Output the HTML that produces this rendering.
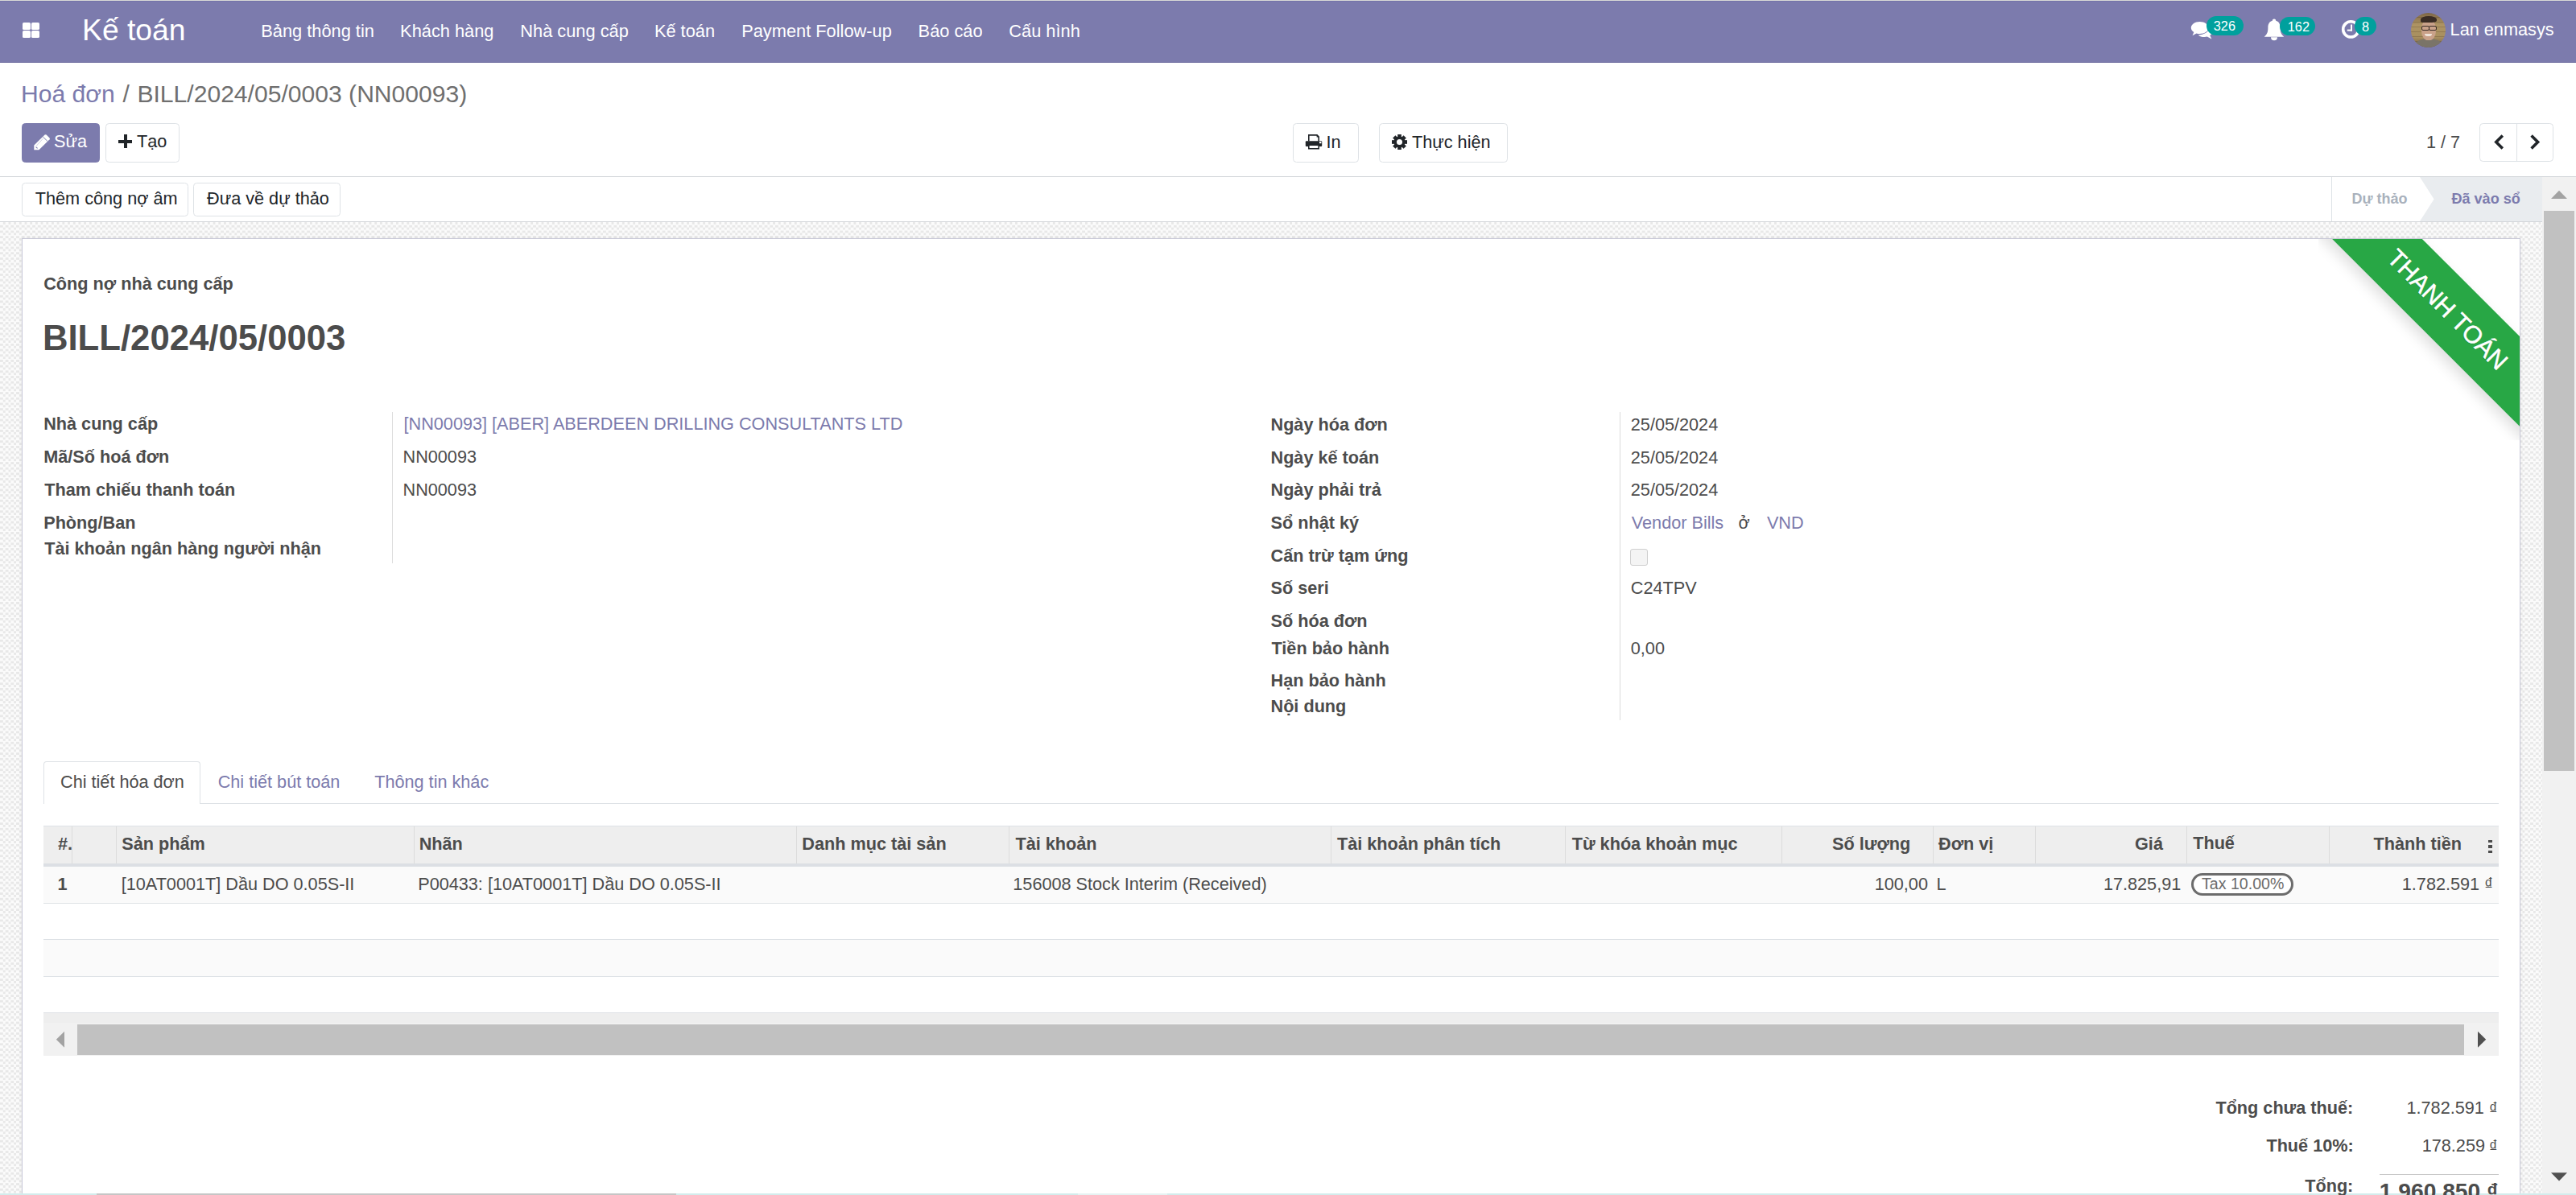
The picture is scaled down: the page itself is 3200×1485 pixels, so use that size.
<!DOCTYPE html>
<html lang="vi"><head><meta charset="utf-8"><title>BILL/2024/05/0003</title>
<style>
html,body{margin:0;padding:0;width:3200px;height:1485px;overflow:hidden;background:#fff;font-family:"Liberation Sans", sans-serif;}
.a{position:absolute;}
.t{position:absolute;white-space:pre;z-index:2;}
svg.a{overflow:visible;z-index:2;}
</style></head><body>
<div class="a" style="left:0.00px;top:0.00px;width:3200.00px;height:1.30px;background:#d9dad6;"></div>
<div class="a" style="left:0.00px;top:1.30px;width:3200.00px;height:76.20px;background:#7C7BAD;"></div>
<div class="a" style="left:0.00px;top:1.30px;width:3200.00px;height:0.90px;background:#7473AA;"></div>
<div class="a" style="left:0.00px;top:76.60px;width:3200.00px;height:1.00px;background:#6f6ea0;"></div>
<div class="a" style="left:27.90px;top:28.20px;width:10.10px;height:8.90px;background:#fff;border-radius:1.6px;"></div>
<div class="a" style="left:39.00px;top:28.20px;width:10.10px;height:8.90px;background:#fff;border-radius:1.6px;"></div>
<div class="a" style="left:27.90px;top:38.00px;width:10.10px;height:8.90px;background:#fff;border-radius:1.6px;"></div>
<div class="a" style="left:39.00px;top:38.00px;width:10.10px;height:8.90px;background:#fff;border-radius:1.6px;"></div>
<svg class="a" style="left:2721px;top:26px" width="28" height="24" viewBox="0 0 28 24"><path d="M11.5 1 C17.8 1 22.5 4.6 22.5 8.5 C22.5 12.6 17.8 16 11.5 16 C10 16 8.7 15.8 7.5 15.4 L2.5 18.3 L4.3 14 C2 12.6 0.8 10.6 0.8 8.5 C0.8 4.6 5.4 1 11.5 1 Z" fill="#fff"/><path d="M23.8 7.5 C26.3 9 27.3 10.8 27.3 12.9 C27.3 14.9 26.2 16.6 24.3 17.9 L26.4 22.4 L20.8 19.6 C19.7 19.9 18.7 20.1 17.5 20.1 C14.2 20.1 11.5 19.1 9.7 17.4 C16.8 17.4 23.8 13.4 23.8 7.5 Z" fill="#fff"/></svg>
<svg class="a" style="left:2812px;top:23px" width="26" height="28" viewBox="0 0 26 28"><circle cx="13" cy="2.6" r="2.2" fill="#fff"/><path d="M13 2.5 C18.5 2.5 20.6 6.6 20.6 11 C20.6 17.5 21.8 19.5 25.3 22.8 L0.7 22.8 C4.2 19.5 5.4 17.5 5.4 11 C5.4 6.6 7.5 2.5 13 2.5 Z" fill="#fff"/><path d="M9 23.2 A4 4 0 0 0 17 23.2 Z" fill="#fff"/></svg>
<svg class="a" style="left:2908px;top:24px" width="26" height="26" viewBox="0 0 26 26"><circle cx="12.3" cy="12.4" r="9.6" fill="none" stroke="#fff" stroke-width="3.6"/><rect x="12" y="6.5" width="2" height="8" fill="#fff"/><rect x="7.8" y="12.6" width="6.2" height="2" fill="#fff"/></svg>
<div class="a" style="left:2740.80px;top:19.60px;width:46.20px;height:24.40px;background:#00A09D;border-radius:12.2px;z-index:2;"></div>
<div class="a" style="left:2832.10px;top:20.70px;width:43.90px;height:23.30px;background:#00A09D;border-radius:11.7px;z-index:2;"></div>
<div class="a" style="left:2924.80px;top:20.90px;width:27.40px;height:23.10px;background:#00A09D;border-radius:11.6px;z-index:2;"></div>
<div class="a" style="left:2995px;top:16px;width:43px;height:43px;border-radius:50%;overflow:hidden;z-index:2;background:linear-gradient(180deg,#7d6646 0%,#ae9463 35%,#a88f5f 70%,#6e5a40 100%)"><div class="a" style="left:0;top:0;width:43px;height:43px;background:repeating-linear-gradient(180deg,rgba(0,0,0,0) 0 5px,rgba(60,40,20,.22) 5px 6px)"></div><div class="a" style="left:6px;top:32px;width:32px;height:15px;border-radius:48% 48% 0 0;background:#7a7468"></div><div class="a" style="left:13px;top:8px;width:18px;height:26px;border-radius:46% 46% 44% 44%;background:#c9a189"></div><div class="a" style="left:12px;top:4px;width:20px;height:8px;border-radius:50% 50% 30% 20%;background:#3a2c24"></div><div class="a" style="left:13px;top:16px;width:8px;height:4px;border:1.3px solid #3a2e28;border-radius:2px"></div><div class="a" style="left:22px;top:16px;width:8px;height:4px;border:1.3px solid #3a2e28;border-radius:2px"></div><div class="a" style="left:17px;top:26px;width:9px;height:2.5px;border-radius:0 0 5px 5px;background:#efe4da"></div></div>
<div class="a" style="left:27.00px;top:153.00px;width:97.00px;height:49.00px;background:#7C7BAD;border:1px solid #7C7BAD;box-sizing:border-box;border-radius:4.5px;"></div>
<svg class="a" style="left:42px;top:166.5px" width="21" height="20" viewBox="0 0 21 20"><path d="M0.3 13.4 L13.6 0.6 Q14.6 -0.2 15.6 0.6 L19.6 4.6 Q20.3 5.4 19.6 6.2 L6.4 19.3 L0.3 19.3 Z" fill="#fff"/><path d="M11.4 3.0 L16.8 8.3" stroke="#7C7BAD" stroke-width="1.0"/><path d="M3.2 14.3 L11.4 5.2" stroke="#7C7BAD" stroke-width="0.6" opacity="0.6"/><path d="M2.6 15.6 L4.6 17.4" stroke="#7C7BAD" stroke-width="1.1"/></svg>
<div class="a" style="left:131.20px;top:153.00px;width:91.40px;height:49.00px;background:#fff;border:1px solid #dee2e6;box-sizing:border-box;border-radius:4.5px;"></div>
<div class="a" style="left:146.90px;top:173.60px;width:17.10px;height:4.00px;background:#212529;"></div>
<div class="a" style="left:153.50px;top:166.90px;width:4.00px;height:17.30px;background:#212529;"></div>
<div class="a" style="left:1606.00px;top:153.00px;width:81.60px;height:48.70px;background:#fff;border:1px solid #dee2e6;box-sizing:border-box;border-radius:4.5px;"></div>
<svg class="a" style="left:1621px;top:166px" width="22" height="21" viewBox="0 0 22 21"><path d="M4.8 9.5 V1.9 H15 L17.2 4.1 V9.5" fill="#fff" stroke="#212529" stroke-width="1.6"/><path d="M14.6 1.1 L18 4.5 L14.6 4.5 Z" fill="#212529"/><rect x="0.8" y="9.2" width="20.4" height="6.9" rx="1" fill="#212529"/><rect x="18.0" y="10.0" width="2.4" height="2.2" fill="#fff"/><path d="M4.8 15 V18.7 H17.2 V15" fill="#fff" stroke="#212529" stroke-width="1.6"/></svg>
<div class="a" style="left:1713.20px;top:153.00px;width:159.60px;height:48.70px;background:#fff;border:1px solid #dee2e6;box-sizing:border-box;border-radius:4.5px;"></div>
<svg class="a" style="left:1729px;top:167px" width="19" height="19" viewBox="0 0 18.8 18.8"><rect x="7.1" y="0" width="4.6" height="6" transform="rotate(0 9.4 9.4)" fill="#212529"/><rect x="7.1" y="0" width="4.6" height="6" transform="rotate(45 9.4 9.4)" fill="#212529"/><rect x="7.1" y="0" width="4.6" height="6" transform="rotate(90 9.4 9.4)" fill="#212529"/><rect x="7.1" y="0" width="4.6" height="6" transform="rotate(135 9.4 9.4)" fill="#212529"/><rect x="7.1" y="0" width="4.6" height="6" transform="rotate(180 9.4 9.4)" fill="#212529"/><rect x="7.1" y="0" width="4.6" height="6" transform="rotate(225 9.4 9.4)" fill="#212529"/><rect x="7.1" y="0" width="4.6" height="6" transform="rotate(270 9.4 9.4)" fill="#212529"/><rect x="7.1" y="0" width="4.6" height="6" transform="rotate(315 9.4 9.4)" fill="#212529"/><circle cx="9.4" cy="9.4" r="7.0" fill="#212529"/><circle cx="9.4" cy="9.4" r="3.5" fill="#fff"/></svg>
<div class="a" style="left:3080.20px;top:153.20px;width:92.20px;height:48.30px;background:#fff;border:1px solid #dee2e6;box-sizing:border-box;border-radius:4.5px;"></div>
<div class="a" style="left:3126.10px;top:153.20px;width:1.00px;height:48.30px;background:#dee2e6;"></div>
<svg class="a" style="left:3096px;top:165px" width="16" height="23" viewBox="0 0 16 23"><path d="M12.8 3.4 L4.8 11.4 L12.8 19.4" fill="none" stroke="#212529" stroke-width="3.6"/></svg>
<svg class="a" style="left:3141px;top:165px" width="16" height="23" viewBox="0 0 16 23"><path d="M3.6 3.4 L11.6 11.4 L3.6 19.4" fill="none" stroke="#212529" stroke-width="3.6"/></svg>
<div class="a" style="left:0.00px;top:219.00px;width:3200.00px;height:1.00px;background:#d3d6da;"></div>
<div class="a" style="left:27.30px;top:227.20px;width:207.00px;height:41.50px;background:#fff;border:1px solid #dee2e6;box-sizing:border-box;border-radius:4.5px;"></div>
<div class="a" style="left:240.40px;top:227.20px;width:183.10px;height:41.50px;background:#fff;border:1px solid #dee2e6;box-sizing:border-box;border-radius:4.5px;"></div>
<div class="a" style="left:2896.20px;top:220.00px;width:1.00px;height:55.00px;background:#dee2e6;"></div>
<svg class="a" style="left:3006px;top:220px" width="152" height="55" viewBox="0 0 152 55"><path d="M0 0 H152 V55 H0 L17.6 27.5 Z" fill="#e9ecef"/></svg>
<div class="a" style="left:0.00px;top:275.00px;width:3158.00px;height:1.00px;background:#d3d6da;"></div>
<div class="a" style="left:0.00px;top:276.00px;width:3158.00px;height:1207.00px;background-color:#f1f1f1;background-image:conic-gradient(#e8e8e8 25%, #fbfbfb 0 50%, #e8e8e8 0 75%, #fbfbfb 0);background-size:6.7px 6.7px;"></div>
<div class="a" style="left:27.00px;top:296.00px;width:3104.00px;height:1187.00px;background:#fff;border:1px solid #c9c9d8;border-bottom:none;box-sizing:border-box;box-shadow:0 0 5px rgba(0,0,0,.07);"></div>
<div class="a" style="left:0.00px;top:1483.00px;width:3200.00px;height:2.00px;background:#d3ecec;"></div>
<div class="a" style="left:120.00px;top:1483.00px;width:720.00px;height:2.00px;background:#c6c6c6;"></div>
<div class="a" style="left:1339.00px;top:1483.00px;width:111.00px;height:2.00px;background:#e6f2f2;"></div>
<div class="a" style="left:3158.00px;top:220.00px;width:42.00px;height:1263.00px;background:#f1f1f1;"></div>
<div class="a" style="left:3160.00px;top:262.00px;width:38.00px;height:696.00px;background:#c1c1c1;"></div>
<svg class="a" style="left:3168px;top:236px" width="22" height="12" viewBox="0 0 22 12"><path d="M1 11 L11 0.8 L21 11 Z" fill="#a3a3a3"/></svg>
<svg class="a" style="left:3168px;top:1457px" width="22" height="11" viewBox="0 0 22 11"><path d="M1 0.2 L21 0.2 L11 10.6 Z" fill="#505050"/></svg>
<div class="a" style="left:2880px;top:296.8px;width:250px;height:250px;overflow:hidden;z-index:3"><div class="a" style="left:-26.8px;top:48.3px;-webkit-text-stroke:0.5px #fff;width:375px;height:79.2px;line-height:79.2px;background:#28a745;transform:rotate(45deg);box-shadow:0 8px 17px rgba(0,0,0,.13);color:#fff;text-align:center;font-size:30.4px;text-shadow:0 1px 1px rgba(0,0,0,.2)">THANH TOÁN</div></div>
<div class="a" style="left:487.20px;top:512.00px;width:1.00px;height:188.00px;background:#dcdcdc;"></div>
<div class="a" style="left:2012.20px;top:512.00px;width:1.00px;height:383.00px;background:#dcdcdc;"></div>
<div class="a" style="left:2025.40px;top:681.60px;width:21.60px;height:21.00px;background:#f4f4f4;border:1px solid #cfcfcf;box-sizing:border-box;border-radius:3px;"></div>
<div class="a" style="left:54.00px;top:998.00px;width:3050.00px;height:1.20px;background:#dee2e6;"></div>
<div class="a" style="left:54.30px;top:946.40px;width:195.20px;height:53.10px;background:#fff;border:1px solid #dee2e6;border-bottom:none;box-sizing:border-box;border-radius:4px 4px 0 0;"></div>
<div class="a" style="left:54.10px;top:1026.00px;width:3049.80px;height:1.00px;background:#dee2e6;"></div>
<div class="a" style="left:54.10px;top:1027.00px;width:3049.80px;height:46.20px;background:#eeeeee;"></div>
<div class="a" style="left:54.10px;top:1073.20px;width:3049.80px;height:3.70px;background:#dcdfe4;"></div>
<div class="a" style="left:88.90px;top:1027.00px;width:1.00px;height:46.20px;background:#dcdcdc;"></div>
<div class="a" style="left:143.80px;top:1027.00px;width:1.00px;height:46.20px;background:#dcdcdc;"></div>
<div class="a" style="left:513.60px;top:1027.00px;width:1.00px;height:46.20px;background:#dcdcdc;"></div>
<div class="a" style="left:988.70px;top:1027.00px;width:1.00px;height:46.20px;background:#dcdcdc;"></div>
<div class="a" style="left:1252.80px;top:1027.00px;width:1.00px;height:46.20px;background:#dcdcdc;"></div>
<div class="a" style="left:1653.00px;top:1027.00px;width:1.00px;height:46.20px;background:#dcdcdc;"></div>
<div class="a" style="left:1944.20px;top:1027.00px;width:1.00px;height:46.20px;background:#dcdcdc;"></div>
<div class="a" style="left:2213.20px;top:1027.00px;width:1.00px;height:46.20px;background:#dcdcdc;"></div>
<div class="a" style="left:2401.20px;top:1027.00px;width:1.00px;height:46.20px;background:#dcdcdc;"></div>
<div class="a" style="left:2528.00px;top:1027.00px;width:1.00px;height:46.20px;background:#dcdcdc;"></div>
<div class="a" style="left:2716.10px;top:1027.00px;width:1.00px;height:46.20px;background:#dcdcdc;"></div>
<div class="a" style="left:2893.00px;top:1027.00px;width:1.00px;height:46.20px;background:#dcdcdc;"></div>
<div class="a" style="left:54.10px;top:1076.90px;width:3049.80px;height:45.10px;background:#fafafa;"></div>
<div class="a" style="left:54.10px;top:1122.00px;width:3049.80px;height:1.00px;background:#dee2e6;"></div>
<div class="a" style="left:54.10px;top:1167.00px;width:3049.80px;height:1.00px;background:#dee2e6;"></div>
<div class="a" style="left:54.10px;top:1168.00px;width:3049.80px;height:45.00px;background:#fafafa;"></div>
<div class="a" style="left:54.10px;top:1213.00px;width:3049.80px;height:1.00px;background:#dee2e6;"></div>
<div class="a" style="left:54.10px;top:1257.60px;width:3049.80px;height:1.00px;background:#dee2e6;"></div>
<div class="a" style="left:54.10px;top:1258.60px;width:3049.80px;height:12.10px;background:#eeeeee;"></div>
<div class="a" style="left:54.10px;top:1270.70px;width:3049.80px;height:41.70px;background:#f1f1f1;"></div>
<div class="a" style="left:96.00px;top:1273.00px;width:2965.00px;height:37.50px;background:#c1c1c1;"></div>
<svg class="a" style="left:69px;top:1281px" width="12" height="22" viewBox="0 0 12 22"><path d="M11 0.8 L11 20.8 L0.8 10.8 Z" fill="#a3a3a3"/></svg>
<svg class="a" style="left:3077px;top:1281px" width="12" height="22" viewBox="0 0 12 22"><path d="M1 0.8 L1 20.8 L11.2 10.8 Z" fill="#505050"/></svg>
<div class="a" style="left:3091.20px;top:1043.50px;width:5.20px;height:3.60px;background:#4c4c4c;"></div>
<div class="a" style="left:3091.20px;top:1050.20px;width:5.20px;height:3.60px;background:#4c4c4c;"></div>
<div class="a" style="left:3091.20px;top:1056.90px;width:5.20px;height:3.60px;background:#4c4c4c;"></div>
<div class="a" style="left:2722.30px;top:1084.70px;width:126.90px;height:28.60px;background:#fff;border:3px solid #6c6c6c;box-sizing:border-box;border-radius:15px;"></div>
<div class="a" style="left:2956.00px;top:1458.90px;width:147.80px;height:1.10px;background:#c8c8c8;"></div>
<div class="t" style="left:102.00px;top:19.43px;font-size:37.3px;line-height:37.3px;font-weight:400;color:#fff;">Kế toán</div>
<div class="t" style="left:324.30px;top:27.65px;font-size:21.8px;line-height:21.8px;font-weight:400;color:#fff;">Bảng thông tin</div>
<div class="t" style="left:497.10px;top:27.65px;font-size:21.8px;line-height:21.8px;font-weight:400;color:#fff;">Khách hàng</div>
<div class="t" style="left:646.30px;top:27.65px;font-size:21.8px;line-height:21.8px;font-weight:400;color:#fff;">Nhà cung cấp</div>
<div class="t" style="left:812.90px;top:27.65px;font-size:21.8px;line-height:21.8px;font-weight:400;color:#fff;">Kế toán</div>
<div class="t" style="left:921.20px;top:27.65px;font-size:21.8px;line-height:21.8px;font-weight:400;color:#fff;">Payment Follow-up</div>
<div class="t" style="left:1140.60px;top:27.65px;font-size:21.8px;line-height:21.8px;font-weight:400;color:#fff;">Báo cáo</div>
<div class="t" style="left:1253.30px;top:27.65px;font-size:21.8px;line-height:21.8px;font-weight:400;color:#fff;">Cấu hình</div>
<div class="t" style="left:2749.80px;top:23.70px;font-size:16.3px;line-height:16.3px;font-weight:400;color:#fff;">326</div>
<div class="t" style="left:2841.80px;top:24.80px;font-size:16.3px;line-height:16.3px;font-weight:400;color:#fff;">162</div>
<div class="t" style="left:2934.00px;top:25.00px;font-size:16.3px;line-height:16.3px;font-weight:400;color:#fff;">8</div>
<div class="t" style="left:3043.60px;top:26.23px;font-size:21.7px;line-height:21.7px;font-weight:400;color:#fff;">Lan enmasys</div>
<div class="t" style="left:26.00px;top:102.32px;font-size:30.1px;line-height:30.1px;font-weight:400;color:#7C7BAD;">Hoá đơn</div>
<div class="t" style="left:152.60px;top:102.32px;font-size:30.1px;line-height:30.1px;font-weight:400;color:#6f6f6f;">/</div>
<div class="t" style="left:170.40px;top:102.32px;font-size:30.1px;line-height:30.1px;font-weight:400;color:#6f6f6f;">BILL/2024/05/0003 (NN00093)</div>
<div class="t" style="left:67.10px;top:165.46px;font-size:21.67px;line-height:21.67px;font-weight:400;color:#fff;">Sửa</div>
<div class="t" style="left:170.00px;top:165.46px;font-size:21.67px;line-height:21.67px;font-weight:400;color:#212529;">Tạo</div>
<div class="t" style="left:1647.60px;top:165.76px;font-size:21.67px;line-height:21.67px;font-weight:400;color:#212529;">In</div>
<div class="t" style="left:1754.00px;top:165.76px;font-size:21.67px;line-height:21.67px;font-weight:400;color:#212529;">Thực hiện</div>
<div class="t" style="left:3013.90px;top:165.56px;font-size:21.67px;line-height:21.67px;font-weight:400;color:#4c4c4c;">1 / 7</div>
<div class="t" style="left:43.80px;top:236.36px;font-size:21.67px;line-height:21.67px;font-weight:400;color:#212529;">Thêm công nợ âm</div>
<div class="t" style="left:257.00px;top:236.36px;font-size:21.67px;line-height:21.67px;font-weight:400;color:#212529;">Đưa về dự thảo</div>
<div class="t" style="left:2921.50px;top:238.36px;font-size:18.0px;line-height:18.0px;font-weight:700;color:#a9b1bc;">Dự thảo</div>
<div class="t" style="left:3045.40px;top:238.28px;font-size:18.1px;line-height:18.1px;font-weight:700;color:#7C7BAD;">Đã vào sổ</div>
<div class="t" style="left:54.20px;top:342.06px;font-size:21.67px;line-height:21.67px;font-weight:700;color:#4c4c4c;">Công nợ nhà cung cấp</div>
<div class="t" style="left:52.90px;top:397.91px;font-size:43.7px;line-height:43.7px;font-weight:700;color:#4c4c4c;">BILL/2024/05/0003</div>
<div class="t" style="left:54.20px;top:516.46px;font-size:21.67px;line-height:21.67px;font-weight:700;color:#4c4c4c;">Nhà cung cấp</div>
<div class="t" style="left:54.20px;top:557.16px;font-size:21.67px;line-height:21.67px;font-weight:700;color:#4c4c4c;">Mã/Số hoá đơn</div>
<div class="t" style="left:55.20px;top:598.46px;font-size:21.67px;line-height:21.67px;font-weight:700;color:#4c4c4c;">Tham chiếu thanh toán</div>
<div class="t" style="left:54.20px;top:639.26px;font-size:21.67px;line-height:21.67px;font-weight:700;color:#4c4c4c;">Phòng/Ban</div>
<div class="t" style="left:55.20px;top:671.06px;font-size:21.67px;line-height:21.67px;font-weight:700;color:#4c4c4c;">Tài khoản ngân hàng người nhận</div>
<div class="t" style="left:501.50px;top:516.26px;font-size:21.67px;line-height:21.67px;font-weight:400;color:#7C7BAD;">[NN00093] [ABER] ABERDEEN DRILLING CONSULTANTS LTD</div>
<div class="t" style="left:500.50px;top:557.26px;font-size:21.67px;line-height:21.67px;font-weight:400;color:#4c4c4c;">NN00093</div>
<div class="t" style="left:500.50px;top:598.26px;font-size:21.67px;line-height:21.67px;font-weight:400;color:#4c4c4c;">NN00093</div>
<div class="t" style="left:1578.50px;top:516.66px;font-size:21.67px;line-height:21.67px;font-weight:700;color:#4c4c4c;">Ngày hóa đơn</div>
<div class="t" style="left:1578.50px;top:557.66px;font-size:21.67px;line-height:21.67px;font-weight:700;color:#4c4c4c;">Ngày kế toán</div>
<div class="t" style="left:1578.50px;top:597.96px;font-size:21.67px;line-height:21.67px;font-weight:700;color:#4c4c4c;">Ngày phải trả</div>
<div class="t" style="left:1578.50px;top:639.06px;font-size:21.67px;line-height:21.67px;font-weight:700;color:#4c4c4c;">Sổ nhật ký</div>
<div class="t" style="left:1578.50px;top:679.86px;font-size:21.67px;line-height:21.67px;font-weight:700;color:#4c4c4c;">Cấn trừ tạm ứng</div>
<div class="t" style="left:1578.50px;top:719.86px;font-size:21.67px;line-height:21.67px;font-weight:700;color:#4c4c4c;">Số seri</div>
<div class="t" style="left:1578.50px;top:760.66px;font-size:21.67px;line-height:21.67px;font-weight:700;color:#4c4c4c;">Số hóa đơn</div>
<div class="t" style="left:1579.50px;top:794.56px;font-size:21.67px;line-height:21.67px;font-weight:700;color:#4c4c4c;">Tiền bảo hành</div>
<div class="t" style="left:1578.50px;top:835.36px;font-size:21.67px;line-height:21.67px;font-weight:700;color:#4c4c4c;">Hạn bảo hành</div>
<div class="t" style="left:1578.50px;top:866.96px;font-size:21.67px;line-height:21.67px;font-weight:700;color:#4c4c4c;">Nội dung</div>
<div class="t" style="left:2025.80px;top:516.66px;font-size:21.67px;line-height:21.67px;font-weight:400;color:#4c4c4c;">25/05/2024</div>
<div class="t" style="left:2025.80px;top:557.66px;font-size:21.67px;line-height:21.67px;font-weight:400;color:#4c4c4c;">25/05/2024</div>
<div class="t" style="left:2025.80px;top:597.96px;font-size:21.67px;line-height:21.67px;font-weight:400;color:#4c4c4c;">25/05/2024</div>
<div class="t" style="left:2026.80px;top:639.06px;font-size:21.67px;line-height:21.67px;font-weight:400;color:#7C7BAD;">Vendor Bills</div>
<div class="t" style="left:2159.40px;top:639.06px;font-size:21.67px;line-height:21.67px;font-weight:400;color:#4c4c4c;">ở</div>
<div class="t" style="left:2194.90px;top:639.06px;font-size:21.67px;line-height:21.67px;font-weight:400;color:#7C7BAD;">VND</div>
<div class="t" style="left:2025.80px;top:719.86px;font-size:21.67px;line-height:21.67px;font-weight:400;color:#4c4c4c;">C24TPV</div>
<div class="t" style="left:2025.80px;top:794.56px;font-size:21.67px;line-height:21.67px;font-weight:400;color:#4c4c4c;">0,00</div>
<div class="t" style="left:75.00px;top:960.86px;font-size:21.67px;line-height:21.67px;font-weight:400;color:#4c4c4c;">Chi tiết hóa đơn</div>
<div class="t" style="left:270.70px;top:960.86px;font-size:21.67px;line-height:21.67px;font-weight:400;color:#7C7BAD;">Chi tiết bút toán</div>
<div class="t" style="left:465.20px;top:960.86px;font-size:21.67px;line-height:21.67px;font-weight:400;color:#7C7BAD;">Thông tin khác</div>
<div class="t" style="left:72.00px;top:1038.16px;font-size:21.67px;line-height:21.67px;font-weight:700;color:#4c4c4c;">#.</div>
<div class="t" style="left:151.20px;top:1038.16px;font-size:21.67px;line-height:21.67px;font-weight:700;color:#4c4c4c;">Sản phẩm</div>
<div class="t" style="left:520.70px;top:1038.16px;font-size:21.67px;line-height:21.67px;font-weight:700;color:#4c4c4c;">Nhãn</div>
<div class="t" style="left:996.30px;top:1038.16px;font-size:21.67px;line-height:21.67px;font-weight:700;color:#4c4c4c;">Danh mục tài sản</div>
<div class="t" style="left:1261.50px;top:1038.16px;font-size:21.67px;line-height:21.67px;font-weight:700;color:#4c4c4c;">Tài khoản</div>
<div class="t" style="left:1661.00px;top:1038.16px;font-size:21.67px;line-height:21.67px;font-weight:700;color:#4c4c4c;">Tài khoản phân tích</div>
<div class="t" style="left:1952.70px;top:1038.16px;font-size:21.67px;line-height:21.67px;font-weight:700;color:#4c4c4c;">Từ khóa khoản mục</div>
<div class="t" style="right:826.75px;top:1038.16px;font-size:21.67px;line-height:21.67px;font-weight:700;color:#4c4c4c;">Số lượng</div>
<div class="t" style="left:2408.00px;top:1038.16px;font-size:21.67px;line-height:21.67px;font-weight:700;color:#4c4c4c;">Đơn vị</div>
<div class="t" style="right:513.09px;top:1038.16px;font-size:21.67px;line-height:21.67px;font-weight:700;color:#4c4c4c;">Giá</div>
<div class="t" style="left:2724.20px;top:1037.16px;font-size:21.67px;line-height:21.67px;font-weight:700;color:#4c4c4c;">Thuế</div>
<div class="t" style="right:142.02px;top:1038.16px;font-size:21.67px;line-height:21.67px;font-weight:700;color:#4c4c4c;">Thành tiền</div>
<div class="t" style="left:71.50px;top:1087.66px;font-size:21.67px;line-height:21.67px;font-weight:700;color:#4c4c4c;">1</div>
<div class="t" style="left:150.70px;top:1087.66px;font-size:21.67px;line-height:21.67px;font-weight:400;color:#4c4c4c;">[10AT0001T] Dầu DO 0.05S-II</div>
<div class="t" style="left:519.20px;top:1087.66px;font-size:21.67px;line-height:21.67px;font-weight:400;color:#4c4c4c;">P00433: [10AT0001T] Dầu DO 0.05S-II</div>
<div class="t" style="left:1258.30px;top:1087.66px;font-size:21.67px;line-height:21.67px;font-weight:400;color:#4c4c4c;">156008 Stock Interim (Received)</div>
<div class="t" style="right:805.05px;top:1087.66px;font-size:21.67px;line-height:21.67px;font-weight:400;color:#4c4c4c;">100,00</div>
<div class="t" style="left:2405.60px;top:1087.66px;font-size:21.67px;line-height:21.67px;font-weight:400;color:#4c4c4c;">L</div>
<div class="t" style="right:490.76px;top:1087.66px;font-size:21.67px;line-height:21.67px;font-weight:400;color:#4c4c4c;">17.825,91</div>
<div class="t" style="left:2735.00px;top:1088.91px;font-size:19.6px;line-height:19.6px;font-weight:400;color:#6c6c6c;">Tax 10.00%</div>
<div class="t" style="right:119.86px;top:1087.66px;font-size:21.67px;line-height:21.67px;font-weight:400;color:#4c4c4c;">1.782.591</div>
<div class="t" style="left:3086.00px;top:1088.36px;font-size:21.67px;line-height:21.67px;font-weight:400;color:#4c4c4c;">₫</div>
<div class="t" style="right:276.72px;top:1366.36px;font-size:21.67px;line-height:21.67px;font-weight:700;color:#4c4c4c;">Tổng chưa thuế:</div>
<div class="t" style="right:114.16px;top:1366.36px;font-size:21.67px;line-height:21.67px;font-weight:400;color:#4c4c4c;">1.782.591</div>
<div class="t" style="left:3091.80px;top:1367.16px;font-size:21.67px;line-height:21.67px;font-weight:400;color:#4c4c4c;">₫</div>
<div class="t" style="right:276.29px;top:1412.96px;font-size:21.67px;line-height:21.67px;font-weight:700;color:#4c4c4c;">Thuế 10%:</div>
<div class="t" style="right:113.00px;top:1412.96px;font-size:21.67px;line-height:21.67px;font-weight:400;color:#4c4c4c;">178.259</div>
<div class="t" style="left:3091.80px;top:1413.76px;font-size:21.67px;line-height:21.67px;font-weight:400;color:#4c4c4c;">₫</div>
<div class="t" style="right:276.66px;top:1462.66px;font-size:21.67px;line-height:21.67px;font-weight:700;color:#4c4c4c;">Tổng:</div>
<div class="t" style="left:2955.80px;top:1466.33px;font-size:28.2px;line-height:28.2px;font-weight:700;color:#4c4c4c;">1.960.850 ₫</div>
</body></html>
